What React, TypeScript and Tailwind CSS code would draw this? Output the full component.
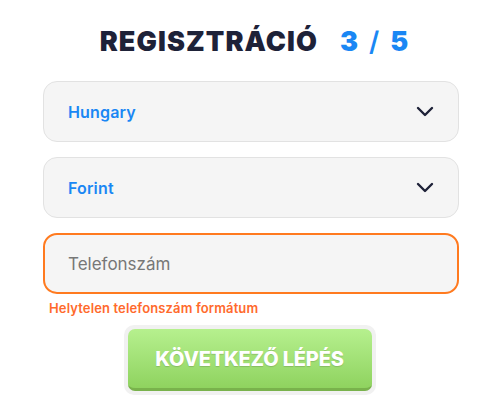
import { useState } from 'react'

function Chevron() {
  return (
    <svg width="18" height="11" viewBox="0 0 18 11" fill="none" className="text-[#1e2238]">
      <path d="M2 2l7 7 7-7" stroke="currentColor" strokeWidth="2.4" strokeLinecap="round" strokeLinejoin="round" />
    </svg>
  )
}

function SelectBox({ value }: { value: string }) {
  return (
    <button
      type="button"
      className="flex h-[61px] w-full items-center justify-between rounded-[14px] border border-[#e2e2e2] bg-[#f5f5f5] pl-[24px] pr-[24px] text-left"
    >
      <span className="text-[16px] font-semibold tracking-[0.01em] text-[#1a87f4]">{value}</span>
      <Chevron />
    </button>
  )
}

export default function App() {
  const [phone, setPhone] = useState('')

  return (
    <div className="min-h-[411px] w-[500px] bg-white font-['Inter',sans-serif]">
      <div className="pl-[43px] pr-[41px] pt-[26px]">
        <h1 className="flex items-center justify-center gap-[22px] pl-[6px] text-[27px] font-black leading-[32px]">
          <span className="tracking-[0.04em] text-[#1e2238]">REGISZTRÁCIÓ</span>
          <span className="flex gap-[11px] text-[#1a87f4]">
            <span>3</span>
            <span className="font-semibold">/</span>
            <span>5</span>
          </span>
        </h1>

        <div className="mt-[23px] flex flex-col gap-[15px]">
          <SelectBox value="Hungary" />
          <SelectBox value="Forint" />
          <div>
            <input
              value={phone}
              onChange={(e) => setPhone(e.target.value)}
              placeholder="Telefonszám"
              className="h-[61px] w-full rounded-[14px] border-2 border-[#ff7a1f] bg-[#f5f5f5] px-[23px] text-[17px] text-[#555] outline-none placeholder:text-[#777]"
            />
            <p className="mt-[6px] pl-[6px] text-[13px] font-semibold leading-[16px] tracking-[0.01em] text-[#ff6a2c]">
              Helytelen telefonszám formátum
            </p>
          </div>
        </div>

        <div className="mt-[9px] flex justify-center pr-[3px]">
          <div className="rounded-[10px] bg-[#f1f1f1] p-[4px]">
            <button
              type="button"
              className="h-[62px] w-[244px] rounded-[7px] border-b-[3px] border-[#79b24c] bg-gradient-to-b from-[#b6f08e] to-[#8fd35f] text-[20px] font-extrabold tracking-[-0.01em] text-white [text-shadow:0_1px_1px_rgba(0,0,0,0.15)]"
            >
              KÖVETKEZŐ LÉPÉS
            </button>
          </div>
        </div>
      </div>
    </div>
  )
}
